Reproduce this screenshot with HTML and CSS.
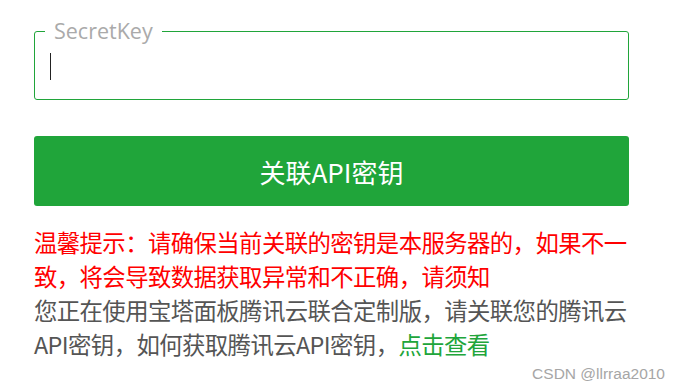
FILE: index.html
```html
<!DOCTYPE html>
<html lang="zh-CN">
<head>
<meta charset="utf-8">
<link rel="stylesheet" href="styles.css">
</head>
<body>
<div class="panel">
  <fieldset class="field">
    <legend class="field-label">SecretKey</legend>
    <div class="field-input"><span class="caret"></span></div>
  </fieldset>
  <button class="btn">关联API密钥</button>
  <p class="warn">温馨提示：请确保当前关联的密钥是本服务器的，如果不一致，将会导致数据获取异常和不正确，请须知</p>
  <p class="info">您正在使用宝塔面板腾讯云联合定制版，请关联您的腾讯云API密钥，如何获取腾讯云API密钥，<a class="link" href="#">点击查看</a></p>
</div>
<div class="watermark">CSDN @llrraa2010</div>
</body>
</html>
```
FILE: styles.css
```css
html, body {
  margin: 0;
  padding: 0;
  background: #fff;
  font-family: "Noto Sans CJK SC", "Noto Sans", sans-serif;
}
body {
  width: 680px;
  height: 392px;
  position: relative;
  overflow: hidden;
}
.panel {
  width: 595px;
  margin-left: 34px;
  padding-top: 20px;
}
.field {
  margin: 0;
  padding: 0 0 0 10px;
  border: 1px solid #20a53a;
  border-radius: 3px;
}
.field-label {
  padding: 0 9px;
  font-size: 21.5px;
  line-height: 22px;
  color: #aaa;
  font-family: "Open Sans", "Noto Sans", sans-serif;
}
.field-input {
  height: 46px;
  padding: 11px 0 0 5px;
}
.caret {
  display: block;
  width: 1px;
  height: 27px;
  background: #222;
}
.btn {
  display: block;
  width: 100%;
  height: 70px;
  margin-top: 36px;
  border: 0;
  border-radius: 3px;
  background: #20a53a;
  color: #fff;
  font-family: inherit;
  font-size: 26px;
  padding: 0;
}
.warn, .info {
  margin: 0 -6px 0 0;
  font-size: 23.4px;
  letter-spacing: -0.6px;
  line-height: 34px;
}
.warn {
  margin-top: 19px;
  color: #ff0000;
}
.info {
  color: #555;
}
.link {
  color: #20a53a;
  text-decoration: none;
}
.watermark {
  position: absolute;
  right: 15px;
  bottom: 9px;
  font-family: "Liberation Sans", Arial, sans-serif;
  font-size: 15.5px;
  color: #a6a6a6;
}
```
